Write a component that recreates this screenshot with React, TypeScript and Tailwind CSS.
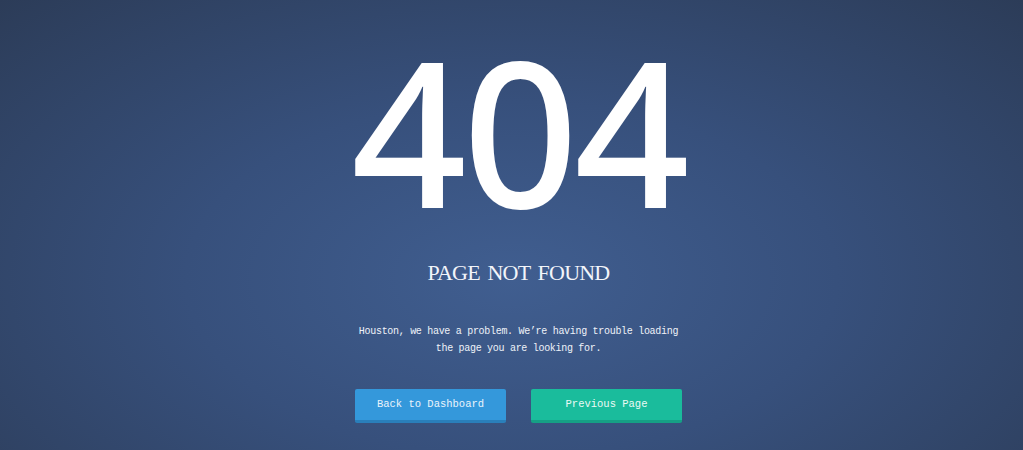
export default function App() {
  return (
    <div className="flex h-[450px] w-full flex-col items-center overflow-hidden bg-[radial-gradient(ellipse_at_50%_62%,#405e90_0%,#37507c_45%,#2c3c58_100%)] pl-[14px] text-white">
      {/* Big code */}
      <h1 className="font-['Noto_Sans',sans-serif] text-[202px] font-medium leading-[260px] tracking-[-4px]">
        404
      </h1>

      {/* Title */}
      <h2 className="font-['Liberation_Serif',serif] text-[22px] leading-[26px] tracking-[-0.8px] [word-spacing:3px] text-[#f2f5fa]">
        PAGE NOT FOUND
      </h2>

      {/* Message */}
      <p className="mt-[37px] text-center font-['Liberation_Mono',monospace] text-[10px] leading-[17px] tracking-[-0.3px] text-[#eef2f8]">
        Houston, we have a problem. We’re having trouble loading
        <br />
        the page you are looking for.
      </p>

      {/* Actions */}
      <div className="mt-[32px] flex gap-[25px] font-['Liberation_Mono',monospace] text-[10.5px]">
        <button className="flex h-[34px] w-[151px] items-center justify-center rounded-[2px] border-b-[3px] border-[#2a7fba] bg-[#3498db] pt-[1px] text-[#eaf4fb]">
          Back to Dashboard
        </button>
        <button className="flex h-[34px] w-[151px] items-center justify-center rounded-[2px] border-b-[3px] border-[#16a085] bg-[#1abc9c] pt-[1px] text-[#eafaf5]">
          Previous Page
        </button>
      </div>
    </div>
  );
}
